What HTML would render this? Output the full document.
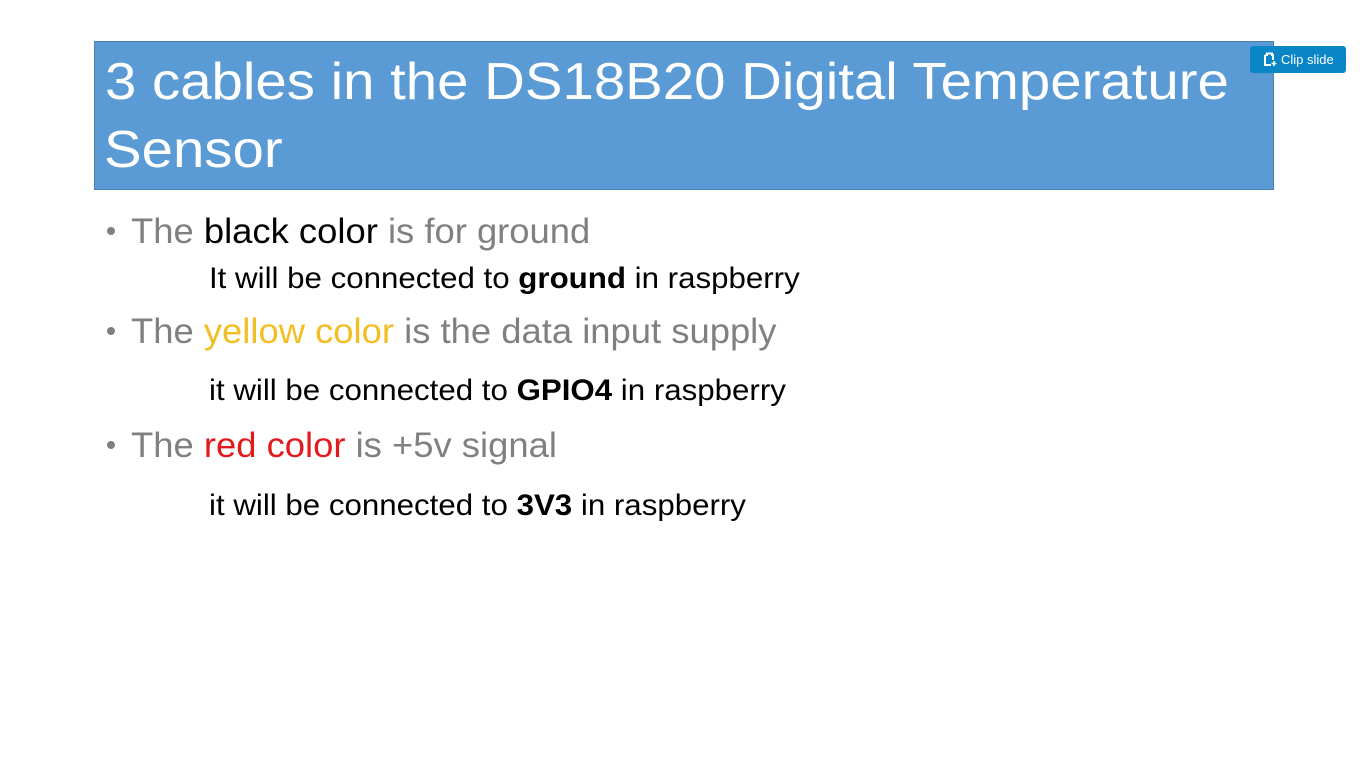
<!DOCTYPE html>
<html><head><meta charset="utf-8"><style>
body{margin:0;width:1366px;height:768px;background:#fff;position:relative;overflow:hidden;font-family:"Liberation Sans",sans-serif}
.t{position:absolute;white-space:nowrap;transform-origin:0 0}
#box{position:absolute;left:94px;top:41px;width:1178px;height:147px;background:#5b9bd5;border:1px solid #4a7fb0}
.title{color:#fff;font-size:52px;line-height:52px;transform:scaleX(1.084)}
.b{font-size:35px;color:#808080;line-height:36px;transform:scaleX(1.04)}
.s{font-size:30px;color:#000;line-height:32px;transform:scaleX(1.042)}
.dot{position:absolute;width:8px;height:8px;border-radius:50%;background:#808080}
#clip{position:absolute;left:1250px;top:46px;width:96px;height:27px;background:#0a86c7;border-radius:3px;color:#fff;font-size:13px;line-height:27px}
</style></head><body>
<div id="box"></div>
<div class="t title" style="left:105px;top:56px">3 cables in the DS18B20 Digital Temperature</div>
<div class="t title" style="left:104px;top:124px">Sensor</div>
<div id="clip"><svg style="position:absolute;left:13px;top:6px" width="14" height="15" viewBox="0 0 14 15"><path d="M2 3h2V1.5h5V3h1v5" fill="none" stroke="#fff" stroke-width="2"/><path d="M2 3v10h6" fill="none" stroke="#fff" stroke-width="2"/><path d="M11 9v5M8.5 11.5h5" stroke="#fff" stroke-width="1.6"/></svg><span style="position:absolute;left:31px">Clip slide</span></div>
<div class="dot" style="left:107px;top:227px"></div>
<div class="t b" style="left:131px;top:214px">The <span style="color:#000">black color</span> is for ground</div>
<div class="t s" style="left:209px;top:263px">It will be connected to <b>ground</b> in raspberry</div>
<div class="dot" style="left:107px;top:327px"></div>
<div class="t b" style="left:131px;top:314px">The <span style="color:#f2be23">yellow color</span> is the data input supply</div>
<div class="t s" style="left:209px;top:375px">it will be connected to <b>GPIO4</b> in raspberry</div>
<div class="dot" style="left:107px;top:441px"></div>
<div class="t b" style="left:131px;top:428px">The <span style="color:#e3191b">red color</span> is +5v signal</div>
<div class="t s" style="left:209px;top:490px">it will be connected to <b>3V3</b> in raspberry</div>
</body></html>
